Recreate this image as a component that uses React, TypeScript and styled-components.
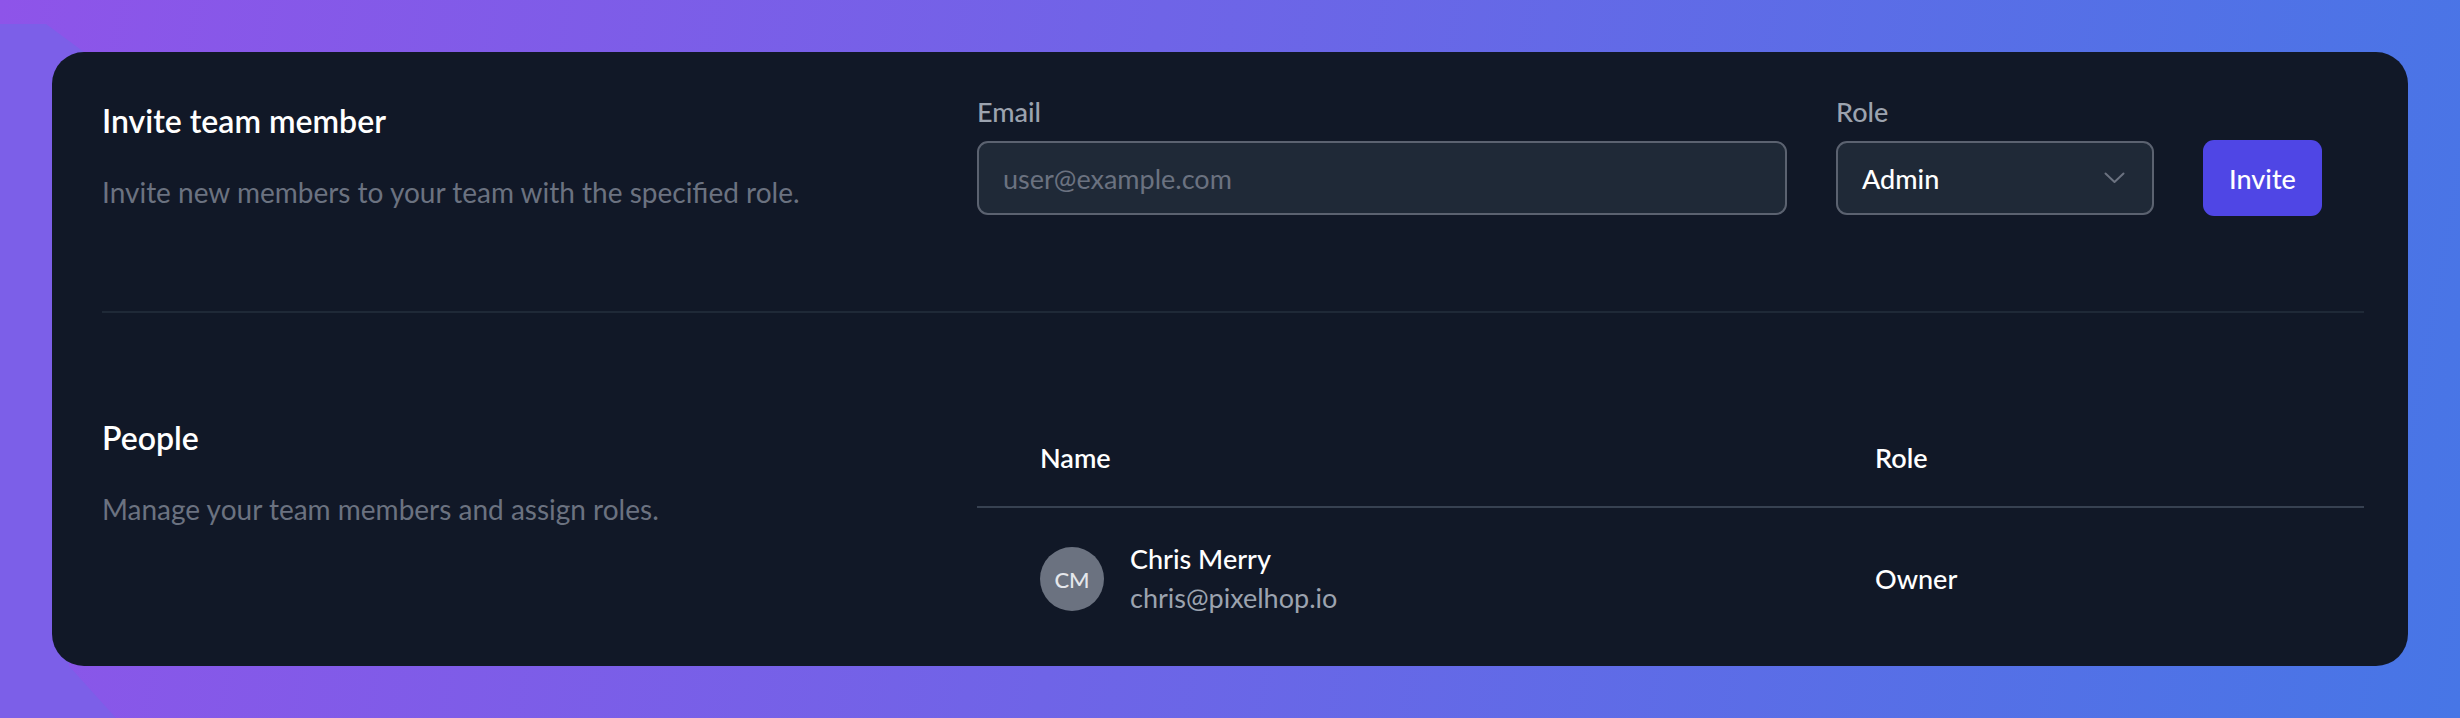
import React from 'react';
import styled, { createGlobalStyle } from 'styled-components';

const GlobalStyle = createGlobalStyle`
  * {
    box-sizing: border-box;
  }

  html,
  body {
    margin: 0;
    padding: 0;
  }

  body {
    font-family: Lato, 'Noto Sans', 'Liberation Sans', sans-serif;
    background: #111827;
  }
`;

interface Member {
  id: string;
  name: string;
  email: string;
  role: string;
}

const members: Member[] = [
  { id: '1', name: 'Chris Merry', email: 'chris@pixelhop.io', role: 'Owner' },
];

const initials = (name: string) =>
  name
    .split(' ')
    .map((part) => part[0])
    .join('')
    .toUpperCase();

const ChevronDown = () => (
  <svg width="21" height="12" viewBox="0 0 21 12" fill="none">
    <path d="M1.5 1.5L10.5 10L19.5 1.5" stroke="#6b7280" strokeWidth="2" strokeLinecap="round" strokeLinejoin="round" />
  </svg>
);

const App: React.FC = () => {
  return (
    <>
      <GlobalStyle />
      <Page>
        <Card>
          <Section $padTop={42} $padBottom={96}>
            <Intro $offset={7}>
              <Title>Invite team member</Title>
              <Description>Invite new members to your team with the specified role.</Description>
            </Intro>
            <InviteForm onSubmit={(e) => e.preventDefault()}>
              <Field $grow>
                <Label htmlFor="invite-email">Email</Label>
                <TextInput id="invite-email" type="email" placeholder="user@example.com" />
              </Field>
              <Field $width={318}>
                <Label htmlFor="invite-role">Role</Label>
                <SelectBox id="invite-role" type="button">
                  <span>Admin</span>
                  <ChevronDown />
                </SelectBox>
              </Field>
              <InviteButton type="submit">Invite</InviteButton>
            </InviteForm>
          </Section>

          <Divider />

          <Section $padTop={97} $padBottom={0}>
            <Intro $offset={8}>
              <Title>People</Title>
              <Description>Manage your team members and assign roles.</Description>
            </Intro>
            <Table>
              <HeadRow>
                <HeadCell>Name</HeadCell>
                <HeadCell>Role</HeadCell>
              </HeadRow>
              {members.map((member) => (
                <BodyRow key={member.id}>
                  <Cell>
                    <Person>
                      <Avatar>{initials(member.name)}</Avatar>
                      <PersonText>
                        <PersonName>{member.name}</PersonName>
                        <PersonEmail>{member.email}</PersonEmail>
                      </PersonText>
                    </Person>
                  </Cell>
                  <Cell>
                    <RoleText>{member.role}</RoleText>
                  </Cell>
                </BodyRow>
              ))}
            </Table>
          </Section>
        </Card>
      </Page>
    </>
  );
};

const Page = styled.div`
  position: relative;
  height: 718px;
  padding: 52px;
  background: linear-gradient(100deg, #8e54e9 0%, #6f64e7 45%, #4776e6 100%);
  overflow: hidden;

  &::before {
    content: '';
    position: absolute;
    inset: 0;
    background: #7c5fe8;
    clip-path: polygon(0 24px, 46px 24px, 84px 52px, 69px 666px, 116px 718px, 0 718px);
  }
`;

const Card = styled.div`
  position: relative;
  height: 614px;
  background: #111827;
  border-radius: 32px;
  padding: 0 44px 0 50px;
  overflow: hidden;
`;

const Section = styled.section<{ $padTop: number; $padBottom: number }>`
  display: grid;
  grid-template-columns: 875px 1fr;
  align-items: start;
  padding-top: ${({ $padTop }) => $padTop}px;
  padding-bottom: ${({ $padBottom }) => $padBottom}px;
`;

const Intro = styled.div<{ $offset: number }>`
  display: flex;
  flex-direction: column;
  gap: 33px;
  padding-top: ${({ $offset }) => $offset}px;
`;

const Title = styled.h2`
  margin: 0;
  font-size: 32px;
  line-height: 40px;
  font-weight: 600;
  color: #ffffff;
`;

const Description = styled.p`
  margin: 0;
  font-size: 28px;
  line-height: 36px;
  font-weight: 400;
  color: #6b7280;
`;

const InviteForm = styled.form`
  display: flex;
  align-items: flex-end;
  gap: 49px;
  padding-right: 42px;
`;

const Field = styled.div<{ $grow?: boolean; $width?: number }>`
  display: flex;
  flex-direction: column;
  gap: 11px;
  flex: ${({ $grow }) => ($grow ? '1 1 auto' : '0 0 auto')};
  width: ${({ $width }) => ($width ? `${$width}px` : 'auto')};
`;

const Label = styled.label`
  font-size: 27px;
  line-height: 36px;
  font-weight: 500;
  color: #9ca3af;
`;

const controlBase = `
  height: 74px;
  border: 2px solid #5b6270;
  border-radius: 11px;
  background: #1f2937;
  font-family: Lato, 'Noto Sans', 'Liberation Sans', sans-serif;
  font-size: 27px;
  outline: none;
`;

const TextInput = styled.input`
  ${controlBase}
  width: 100%;
  padding: 0 24px;
  color: #ffffff;

  &::placeholder {
    color: #6b7280;
  }
`;

const SelectBox = styled.button`
  ${controlBase}
  display: flex;
  align-items: center;
  justify-content: space-between;
  width: 100%;
  padding: 0 27px 0 24px;
  color: #ffffff;
  font-weight: 500;
  text-align: left;
  cursor: pointer;
`;

const InviteButton = styled.button`
  flex: 0 0 119px;
  height: 76px;
  margin-bottom: -1px;
  padding: 0;
  border: none;
  border-radius: 11px;
  background: #4f46e5;
  color: #ffffff;
  font-family: Lato, 'Noto Sans', 'Liberation Sans', sans-serif;
  font-size: 27px;
  font-weight: 500;
  cursor: pointer;
`;

const Divider = styled.hr`
  margin: 0;
  border: none;
  height: 2px;
  background: #1f2937;
`;

const Table = styled.div`
  display: flex;
  flex-direction: column;
`;

const HeadRow = styled.div`
  display: grid;
  grid-template-columns: 835px 1fr;
  border-bottom: 2px solid #374151;
`;

const HeadCell = styled.div`
  padding: 30px 0 30px 63px;
  font-size: 27px;
  line-height: 36px;
  font-weight: 600;
  color: #ffffff;
`;

const BodyRow = styled.div`
  display: grid;
  grid-template-columns: 835px 1fr;
  align-items: center;
`;

const Cell = styled.div`
  padding: 34px 0 34px 63px;
`;

const Person = styled.div`
  display: flex;
  align-items: center;
  gap: 26px;
`;

const Avatar = styled.div`
  display: flex;
  align-items: center;
  justify-content: center;
  width: 64px;
  height: 64px;
  border-radius: 50%;
  background: #6b7280;
  color: #e5e7eb;
  font-size: 22px;
  font-weight: 500;
`;

const PersonText = styled.div`
  display: flex;
  flex-direction: column;
  gap: 4px;
`;

const PersonName = styled.span`
  font-size: 27px;
  line-height: 34px;
  font-weight: 500;
  color: #ffffff;
`;

const PersonEmail = styled.span`
  font-size: 27px;
  line-height: 36px;
  color: #9ca3af;
`;

const RoleText = styled.span`
  font-size: 27px;
  line-height: 36px;
  font-weight: 500;
  color: #ffffff;
`;

export default App;
